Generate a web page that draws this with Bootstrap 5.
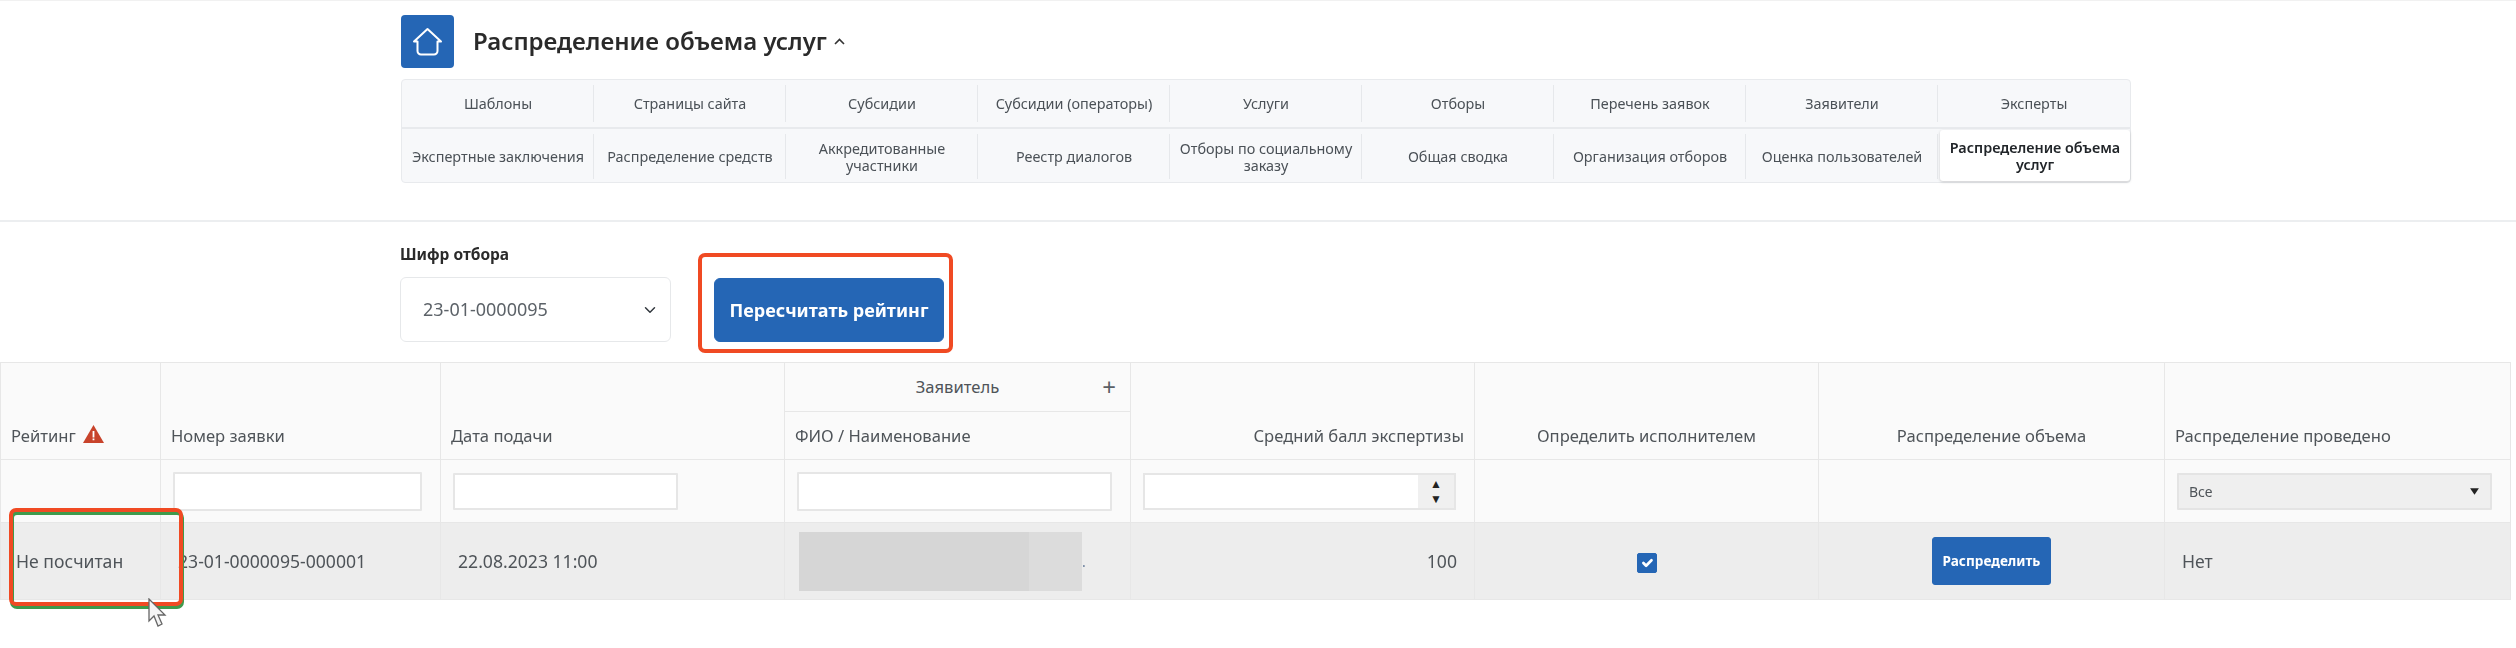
<!DOCTYPE html>
<html lang="ru">
<head>
  <meta charset="UTF-8" />
  <meta name="viewport" content="width=device-width, initial-scale=1.0"/>
  <title>Распределение объема услуг</title>
  <link href="https://cdn.jsdelivr.net/npm/bootstrap@5.3.0/dist/css/bootstrap.min.css" rel="stylesheet">
  <style>
    body {
      background: #fff;
      font-family: "Noto Sans", "Open Sans", sans-serif;
      font-size: 14px;
      color: #495057;
      position: relative;
      height: 648px;
      overflow: hidden;
      border-top: 1px solid #f1f1f1;
    }
    .page-head {
      padding: 14px 0 0 401px;
      height: 221px;
      border-bottom: 2px solid #eceef0;
    }
    .home-tile {
      width: 53px;
      height: 53px;
      background: #2566b5;
      border-radius: 4px;
    }
    .page-title {
      font-size: 24px;
      font-weight: 600;
      color: #2a2a2a;
      margin: 0 0 0 19px;
    }
    .title-caret { margin-left: 7px; }
    .section-grid {
      width: 1730px;
      height: 104px;
      margin-top: 11px;
      display: grid;
      grid-template-columns: repeat(9, 1fr);
      grid-template-rows: 49px 55px;
      background: #f7f8fa;
      border: 1px solid #e8eaed;
      border-radius: 4px;
    }
    .section-cell {
      display: flex;
      align-items: center;
      justify-content: center;
      text-align: center;
      font-size: 14.4px;
      line-height: 17px;
      color: #4b5157;
      padding: 0 6px;
      position: relative;
    }
    .section-cell:nth-child(-n+9) { border-bottom: 2px solid #e8eaed; }
    .section-cell:not(:nth-child(9n))::after {
      content: "";
      position: absolute;
      right: 0;
      top: 5px;
      bottom: 5px;
      width: 1px;
      background: #e6e8eb;
    }
    .section-cell.is-current {
      background: #fff;
      color: #212529;
      font-weight: 600;
      border-radius: 3px;
      box-shadow: 0 1px 3px rgba(0, 0, 0, .18);
      margin: 1px 0 3px 2px;
    }
    .filter-bar {
      padding: 0 0 0 400px;
      height: 136px;
      gap: 43px;
    }
    .field-label {
      font-size: 15.5px;
      font-weight: 700;
      color: #2a2a2a;
      margin-bottom: 11px;
    }
    .cipher-select {
      width: 271px;
      height: 65px;
      font-size: 18px;
      color: #5c6268;
      padding-left: 22px;
      border-color: #e6e8ea;
    }
    .btn-recalc {
      width: 230px;
      height: 64px;
      background: #2566b5;
      border-color: #2566b5;
      font-size: 18px;
      font-weight: 700;
      padding: 0;
    }
    .data-wrap { width: 2510px; }
    .data-table {
      table-layout: fixed;
      width: 2510px;
      margin: 0;
      font-size: 16.6px;
      color: #4f5459;
      border-color: #e7e7e7;
    }
    .data-table > :not(caption) > * > * {
      border: 1px solid #e7e7e7;
      padding: 0 10px;
      background: #fafafa;
      box-shadow: none;
      color: inherit;
    }
    .data-table th { font-weight: 400; vertical-align: bottom; }
    .w-rating { width: 160px; }
    .w-number { width: 280px; }
    .w-date, .w-score, .w-assign { width: 344px; }
    .w-name, .w-volume, .w-done { width: 346px; }
    .row-top { height: 49px; }
    .row-sub { height: 48px; }
    .row-filter { height: 63px; }
    .row-data { height: 77px; }
    .data-table th.head-cell { padding-bottom: 10px; }
    .data-table th.group-cell { vertical-align: middle; text-align: center; position: relative; }
    .plus-mark {
      position: absolute;
      right: 14px;
      top: 12px;
      font-size: 24px;
      line-height: 24px;
      color: #5a6066;
    }
    .warn-mark { margin-left: 7px; vertical-align: -1px; }
    .data-table .row-filter td { padding: 0 18px 0 12px; vertical-align: middle; }
    .filter-input {
      height: 37px;
      border: 2px solid #e6e6e6;
      border-radius: 1px;
      background: #fff;
    }
    .row-filter .tall-input { height: 39px; }
    .row-filter .date-input { width: 225px; }
    .spin-box {
      height: 37px;
      border: 2px solid #e6e6e6;
      background: #fff;
    }
    .spin-box input { border: 0; outline: 0; min-width: 0; background: transparent; }
    .spin-arrows {
      width: 36px;
      background: #f0f0f0;
      font-size: 12px;
      line-height: 15px;
      color: #222;
    }
    .done-select {
      height: 37px;
      font-size: 14px;
      padding: 0 0 0 10px;
      color: #4f5459;
      background-color: #efefef;
      border: 2px solid #e4e4e4;
      border-radius: 1px;
      background-image: url("data:image/svg+xml,%3csvg xmlns='http://www.w3.org/2000/svg' viewBox='0 0 10 8'%3e%3cpath fill='%23222' d='M1 1h8L5 7z'/%3e%3c/svg%3e");
      background-size: 11px 9px;
      background-position: right 10px center;
    }
    .data-table .row-data { font-size: 17.6px; }
    .data-table .row-data td { background: #ededed; vertical-align: middle; padding: 0 17px; }
    .data-table .row-data td.rating-cell { padding-left: 15px; padding-right: 0; }
    .data-table .row-data td.name-cell { padding: 0 12px; }
    .hidden-name { height: 59px; width: 283px; margin: 0 0 0 2px; }
    .hidden-name span { background: #d6d6d6; }
    .hidden-name .name-tail { width: 53px; flex: none; background: #dcdcdc; }
    .name-dot { font-size: 14px; color: #6a7f9c; line-height: 1; margin-bottom: 22px; }
    .form-check-input.done-check {
      width: 20px;
      height: 20px;
      margin: 0;
      vertical-align: middle;
      background-color: #2566b5;
      border-color: #2566b5;
      border-radius: 2px;
    }
    .btn-share {
      width: 119px;
      height: 48px;
      padding: 0;
      background: #2566b5;
      border-color: #2566b5;
      font-size: 13.6px;
      font-weight: 700;
      border-radius: 3px;
    }
    .mark-red {
      position: absolute;
      border: 4px solid #f04a23;
      border-radius: 7px;
    }
    .mark-button { left: 698px; top: 252px; width: 255px; height: 100px; }
    .mark-green {
      position: absolute;
      left: 10px;
      top: 510px;
      width: 174px;
      height: 98px;
      border: 4px solid #3f9a4c;
      border-radius: 7px;
    }
    .mark-cell { left: 9px; top: 507px; width: 174px; height: 98px; }
    .cursor-mark { position: absolute; left: 148px; top: 597px; }
    .page-shot { filter: blur(.45px); height: 100%; }
  </style>
</head>
<body class="m-0">
<div class="page-shot">

  <div class="page-head">
    <div class="d-flex align-items-center">
      <div class="home-tile d-flex align-items-center justify-content-center">
        <svg width="31" height="29" viewBox="0 0 31 29" fill="none" stroke="#fff" stroke-width="2" stroke-linejoin="round" stroke-linecap="round">
          <path d="M15.500 2 29 14.500h-3.500V24a3.500 3.500 0 0 1-3.500 3.500H9A3.500 3.500 0 0 1 5.500 24v-9.500H2z"/>
        </svg>
      </div>
      <h1 class="page-title">Распределение объема услуг</h1>
      <svg class="title-caret" width="11" height="7" viewBox="0 0 11 7" fill="none" stroke="#333" stroke-width="1.6"><path d="M1 6 5.500 1.500 10 6"/></svg>
    </div>

    <div class="section-grid">
      <div class="section-cell">Шаблоны</div>
      <div class="section-cell">Страницы сайта</div>
      <div class="section-cell">Субсидии</div>
      <div class="section-cell">Субсидии (операторы)</div>
      <div class="section-cell">Услуги</div>
      <div class="section-cell">Отборы</div>
      <div class="section-cell">Перечень заявок</div>
      <div class="section-cell">Заявители</div>
      <div class="section-cell">Эксперты</div>
      <div class="section-cell">Экспертные заключения</div>
      <div class="section-cell">Распределение средств</div>
      <div class="section-cell">Аккредитованные участники</div>
      <div class="section-cell">Реестр диалогов</div>
      <div class="section-cell">Отборы по социальному заказу</div>
      <div class="section-cell">Общая сводка</div>
      <div class="section-cell">Организация отборов</div>
      <div class="section-cell">Оценка пользователей</div>
      <div class="section-cell is-current">Распределение объема услуг</div>
    </div>
  </div>

  <div class="filter-bar d-flex align-items-end pb-3 mb-1">
    <div>
      <div class="field-label">Шифр отбора</div>
      <select class="form-select cipher-select">
        <option>23-01-0000095</option>
      </select>
    </div>
    <button type="button" class="btn btn-primary btn-recalc">Пересчитать рейтинг</button>
  </div>

  <div class="data-wrap">
    <table class="table data-table">
      <colgroup>
        <col class="w-rating"><col class="w-number"><col class="w-date"><col class="w-name">
        <col class="w-score"><col class="w-assign"><col class="w-volume"><col class="w-done">
      </colgroup>
      <thead>
        <tr class="row-top">
          <th rowspan="2" class="head-cell">Рейтинг<svg class="warn-mark" width="21" height="18" viewBox="0 0 21 18"><path fill="#c8432b" d="M10.500 0 21 18H0z"/><path fill="#fff" d="M9.600 6h1.800v6.500H9.600zM9.600 13.500h1.800v1.800H9.600z"/></svg></th>
          <th rowspan="2" class="head-cell">Номер заявки</th>
          <th rowspan="2" class="head-cell">Дата подачи</th>
          <th class="group-cell">Заявитель<span class="plus-mark">+</span></th>
          <th rowspan="2" class="head-cell text-end">Средний балл экспертизы</th>
          <th rowspan="2" class="head-cell text-center">Определить исполнителем</th>
          <th rowspan="2" class="head-cell text-center">Распределение объема</th>
          <th rowspan="2" class="head-cell">Распределение проведено</th>
        </tr>
        <tr class="row-sub">
          <th class="head-cell">ФИО / Наименование</th>
        </tr>
        <tr class="row-filter">
          <td></td>
          <td><div class="filter-input tall-input"></div></td>
          <td><div class="filter-input date-input"></div></td>
          <td><div class="filter-input tall-input"></div></td>
          <td>
            <div class="spin-box d-flex">
              <input type="text" class="flex-grow-1" aria-label="Средний балл">
              <div class="spin-arrows d-flex flex-column align-items-center justify-content-center"><span>▲</span><span>▼</span></div>
            </div>
          </td>
          <td></td>
          <td></td>
          <td>
            <select class="form-select done-select">
              <option>Все</option>
            </select>
          </td>
        </tr>
      </thead>
      <tbody>
        <tr class="row-data">
          <td class="rating-cell">Не посчитан</td>
          <td>23-01-0000095-000001</td>
          <td>22.08.2023 11:00</td>
          <td class="name-cell">
            <div class="d-flex align-items-end">
              <div class="hidden-name d-flex"><span class="flex-grow-1"></span><span class="name-tail"></span></div>
              <span class="name-dot">.</span>
            </div>
          </td>
          <td class="text-end">100</td>
          <td class="text-center"><input class="form-check-input done-check" type="checkbox" checked aria-label="Определить исполнителем"></td>
          <td class="text-center"><button type="button" class="btn btn-primary btn-share">Распределить</button></td>
          <td>Нет</td>
        </tr>
      </tbody>
    </table>
  </div>

  <div class="mark-green"></div>
  <div class="mark-red mark-cell"></div>
  <div class="mark-red mark-button"></div>
  <svg class="cursor-mark" width="20" height="32" viewBox="0 0 20 32" fill="#f4f4f4" stroke="#666" stroke-width="1.300"><path d="M1 1v22l5-5 4 10 4-2-4-9h7z"/></svg>
</div>

<script src="https://cdn.jsdelivr.net/npm/bootstrap@5.3.0/dist/js/bootstrap.bundle.min.js"></script>
</body>
</html>
